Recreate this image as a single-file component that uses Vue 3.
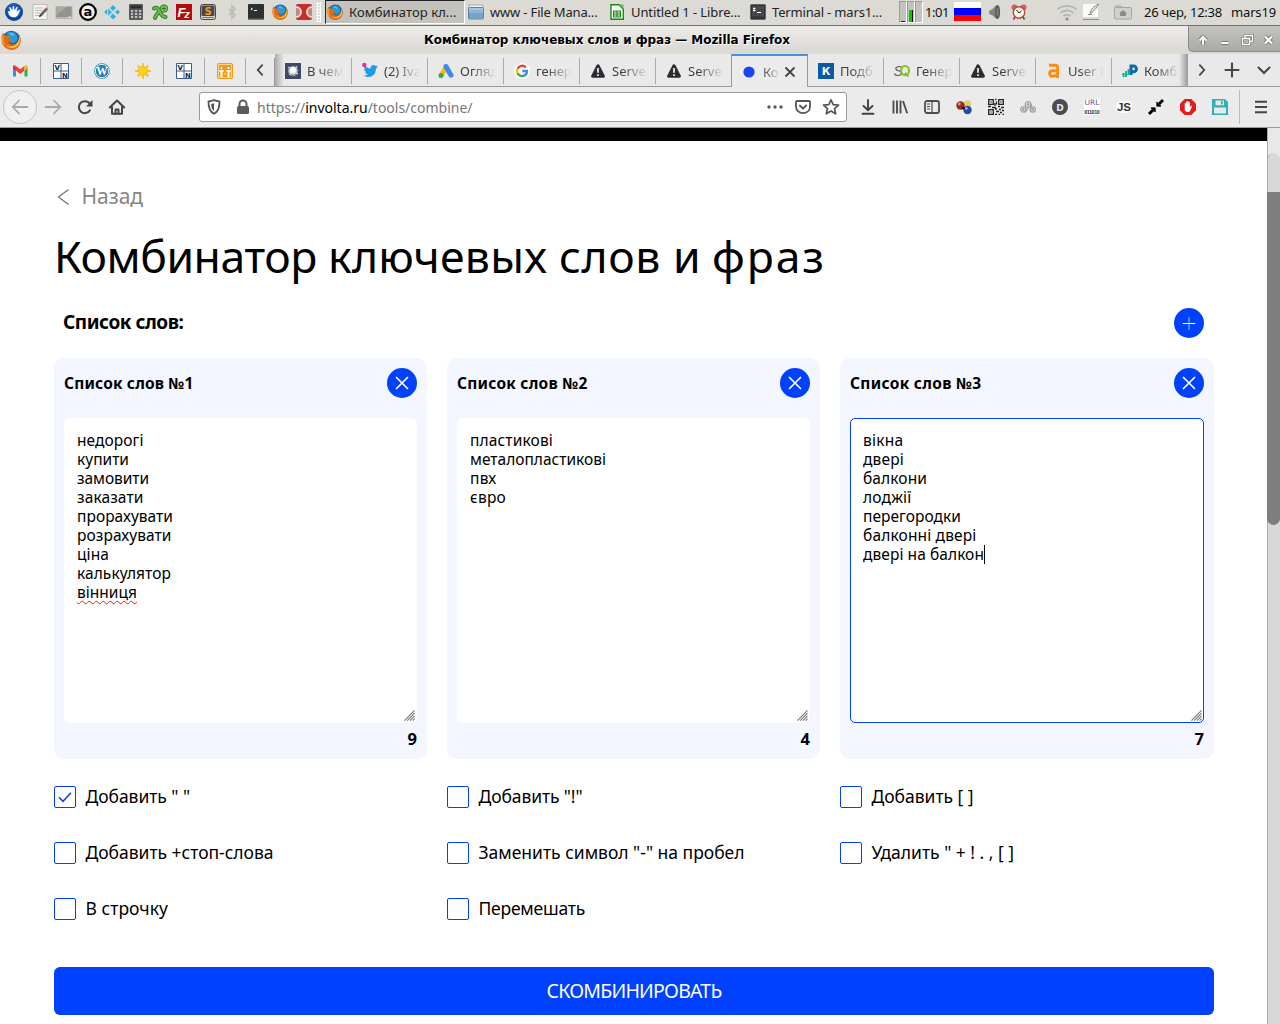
<script setup>
const vFit = {
  mounted(el, { value }) {
    if (!value) return
    const natural = el.getBoundingClientRect().width
    el.style.letterSpacing = (value - natural) / el.textContent.length + 'px'
  },
}

const firefox = `
<circle cx="8.2" cy="8" r="7.4" fill="#1b5fa8"/><path d="M5 2.2C8 .6 12 1.6 13 5c.8 3-1 5-3 5.500C7 11 6 8 4 7z" fill="#2a9ad6"/>
<path d="M7 3.200c1.500-.5 2.500.3 3 1.300" stroke="#8fd3f0" fill="none"/>
<path d="M1.600 2.200C.2 4.700-.2 9 1.500 12c2.600 4.600 9.300 5.200 12.500 1.300C16.300 10.700 16.300 6 14.300 3.200c.3 2 .3 3-.2 4.300-.8 3-3.200 4.500-5.600 4C6.800 11 6 10 6.200 8.800c1 .3 2-.1 2.600-.9-.9-.3-2-.2-2.700-1 .1-.9.8-1.400 1.200-1.800-.8-.1-1.700-.3-2.300.1C3.900 4.700 2.500 3.700 1.600 2.200z" fill="#e66a10"/>
<path d="M14.800 4.600c1 3 .3 6.800-2.600 8.700-3 2-7 1-8.700-1.800 3 2.500 7 2 9-.5 1.500-1.800 2.300-4 2.300-6.400z" fill="#ffc52e"/>
<path d="M2 4.600C1 7.500 1 10 2.600 12" stroke="#f8a02c" stroke-width="1.200" fill="none"/>`
const warn = `<path d="M8 1.200c.7 0 1.100.3 1.400.9l5.300 10.400c.6 1.300 0 2.200-1.300 2.200H2.600c-1.300 0-1.900-.9-1.300-2.200L6.600 2.100c.3-.6.7-.9 1.400-.9z" fill="#2a2e32"/><path d="M8 5v4.800M8 11.200v1.800" stroke="#e9e9e9" stroke-width="1.800"/>`
const vn = `<path d="M.5.5h15v15H.5z" fill="#fff" stroke="#365a96"/><path d="M8 0v16M0 8h16" stroke="#365a96"/><text x="1.500" y="7" font-size="7" font-weight="700" font-family="DejaVu Sans" fill="#222">V</text><text x="9" y="14.700" font-size="7" font-weight="700" font-family="DejaVu Sans" fill="#222">N</text>`
const term = `<rect x=".5" y=".5" width="15" height="15" rx="1" fill="#2f3335" stroke="#63676a"/><rect x="2" y="2" width="12" height="10.500" fill="#45494c"/><path d="M3 4.500h2.500M3 6.500h2.500M4.200 3.500v4M7 8.500h4" stroke="#fff" stroke-width="1"/>`

const icons = {
  firefox, warn, vn, term,
  mouse: `<circle cx="8" cy="8" r="8" fill="#0a45a5"/><circle cx="8" cy="7" r="6.500" fill="#1b5abb"/><path d="M2.800 8.500C2.600 7 4 6.800 5 7.700L3.800 4.500c-.2-.9.800-1.200 1.200-.4l1.700 2.600.1-3.300c.1-.9 1.200-.9 1.300 0l.5 3.300 1.300-2.800c.4-.8 1.400-.4 1.200.4l-.8 3.400 1.900-1.500c.7-.5 1.300.2.900.8-.9 1.500-1.300 5.500-5.300 5.700-2.700 0-4.600-1.400-5-4.200z" fill="#fff"/>`,
  edit: `<path d="M1 .5h14v15H1z" fill="#f3f3f0" stroke="#bbb"/><path d="M3 4h8M3 6.500h7M3 9h5M3 11.500h4" stroke="#bbb"/><path d="M7 13l1-3 5.500-6 2 1.800L10 12z" fill="#6a6864"/><path d="M13 4.500l1.200-1.300 2 1.800L15 6.300z" fill="#cb5d86"/><path d="M7 13l.8-2.300L9.500 12z" fill="#222"/>`,
  drive: `<rect x="-.5" y="2" width="17" height="13" rx="1" fill="#b5b4af"/><rect x=".5" y="3" width="15" height="10" fill="#92938e"/><path d="M1 10L11 3H1z" fill="#a9aaa5"/><path d="M10 14l5-2v2z" fill="#e1e1d9"/>`,
  at: `<circle cx="8" cy="8" r="7.800" fill="#f1f1ee" stroke="#000" stroke-width="2.200"/><text x="8" y="12.200" text-anchor="middle" font-family="DejaVu Sans" font-weight="700" font-size="13">a</text>`,
  kodi: `<g fill="#30b0e5"><path d="M9 1l3 3-3 3-3-3zM13.500 5.500L16 8l-2.500 2.500L11 8zM9 9.500l3 3-3 3-3-3zM3.200 5v6L.5 8.500v-1z"/><path d="M4.200 4.500l1 1L8 8l-3.800 4z"/></g>`,
  calc: `<rect x="1" width="14" height="16" rx="1" fill="#575b5c"/><rect x="2.500" y="1.500" width="11" height="3" fill="#2c2f30"/><path d="M3 7h2.200M7 7h2.200M11 7h2.200M3 10h2.200M7 10h2.200M11 10h2.200M3 13h2.200M7 13h2.200M11 13h2.200" stroke="#e4e4e0" stroke-width="1.700"/>`,
  gx: `<path d="M2 4.500c3-2 5 1 6 3.500s3 5 5.500 5M3 14c1-3 4-7 7-8" stroke="#2b7b1d" stroke-width="4" stroke-linecap="round" fill="none"/><path d="M2 4.500c3-2 5 1 6 3.500s3 5 5.500 5M3 14c1-3 4-7 7-8" stroke="#66bd4b" stroke-width="2.200" stroke-linecap="round" fill="none"/><circle cx="12" cy="4.500" r="3.700" fill="#80cb63" stroke="#2b7b1d"/><path d="M10 4.500h4M12 2.500v4" stroke="#2b7b1d"/>`,
  fz: `<path d="M0 0h16v16H0z" fill="#b60b0b"/><text x="1.500" y="13" font-family="Liberation Sans" font-weight="700" font-style="italic" font-size="13" fill="#fff">F</text><text x="8.200" y="14" font-family="Liberation Sans" font-weight="700" font-style="italic" font-size="11" fill="#fff">z</text>`,
  sublime: `<rect x=".5" y=".5" width="15" height="15" rx="2" fill="#d6d3ca" stroke="#4a4744"/><rect x="1.500" y="1.500" width="13" height="10.500" rx="1" fill="#4b4844"/><text x="8" y="10.500" text-anchor="middle" font-family="DejaVu Sans" font-weight="700" font-size="10" fill="#f09a2a">S</text><path d="M2 13.500h12" stroke="#777"/>`,
  bt: `<path d="M5 5l6 6-3 3V2l3 3-6 6" fill="none" stroke="#bcbcb8" stroke-width="1.600"/>`,
  terminal2: `<rect y="0" width="16" height="15.500" rx="1" fill="#2d3132"/><path d="M3 4l1.500 1L3 6M6 6.500h3" stroke="#fff" fill="none"/><path d="M0 15h16" stroke="#666"/>`,
  dc: `<rect width="16" height="16" rx="2" fill="#c92b26"/><path d="M0 3a5 5 0 010 10M16 3a5 5 0 000 10" stroke="#ecd8d4" stroke-width="2" fill="#bd8883"/>`,
  folder: `<path d="M1 1h14v4H1z" fill="#f2f2ef" stroke="#aaa"/><rect x=".5" y="3.500" width="15" height="11.500" rx="1" fill="#8bb4d5" stroke="#5c87a8"/><path d="M1 5h14" stroke="#bed6e8"/><path d="M1 9h14v5H1z" fill="#76a3c8"/>`,
  sheet: `<path d="M2 .7h8l4.300 4.300v10.300H2z" fill="#fff" stroke="#168a13" stroke-width="1.400"/><path d="M10 .5h4.500V5z" fill="#62b954"/><path d="M4.500 7h7v6h-7zM4.500 9h7M4.500 11h7M8 7v6" stroke="#168a13" stroke-width="1.100" fill="none"/>`,
  speaker: `<path d="M2.500 6.500c1-1 2-.8 3-1.500l4-4v14l-4-3.500c-1-.7-2-.5-3-1.500-.6-1-.6-2.500 0-3.500z" fill="#83847f"/><ellipse cx="10.500" cy="8" rx="2.600" ry="7" fill="#55595a"/><ellipse cx="10.500" cy="8" rx="1.200" ry="4" fill="#7b7e7d"/>`,
  alarm: `<path d="M4 13l-1.500 2.500M12 13l1.500 2.500" stroke="#8c302b" stroke-width="1.500"/><circle cx="3.500" cy="3.500" r="3" fill="#d85f51"/><circle cx="12.500" cy="3.500" r="3" fill="#d85f51"/><circle cx="8" cy="8.500" r="5.700" fill="#fff4e6" stroke="#a94e40" stroke-width="1.400"/><path d="M5.500 6l2.500 3 2.500-2" stroke="#222" fill="none"/>`,
  wifi: `<g fill="none" stroke="#b1b1ad" stroke-width="1.600"><path d="M-1.500 5.500c5-4.600 14-4.600 19 0M1.500 9c4-3.300 9-3.300 13 0M4.500 12c2.500-1.800 4.500-1.800 7 0"/></g><circle cx="8" cy="15" r="1.600" fill="#8f8f8b"/>`,
  note: `<path d="M0 0h15v13H0z" fill="#f9f9f8"/><path d="M0 15.500h16" stroke="#888"/><path d="M7 9.500c.5-4 4-7.500 8.500-9.500-1 3-4 7-8.500 9.500zM5 10.500h4" stroke="#8c8c88" stroke-width="1" fill="#ddd"/>`,
  home2: `<path d="M0 3.500V2h6l1 1.500" fill="#c6c6c3" stroke="#aaa"/><rect x="-.5" y="3.500" width="17" height="11.500" rx="1" fill="#cfcfcc" stroke="#a5a5a2"/><path d="M8 6l4 3.500h-1V12H5V9.500H4z" fill="#8b8b88"/>`,
  gmail: `<path d="M1 3.500v10h3V8z" fill="#4285f4"/><path d="M15.500 3.500v10h-3V8z" fill="#34a853"/><path d="M1 3.500C1 2 3 1.800 4 3l4.200 3.300L12.500 3v4.600L8.200 11 4 7.600 1 5.500z" fill="#ea4335"/><path d="M12.500 3c1.500-1.300 3-.5 3 1v1.500l-3 2.200z" fill="#fbbc04"/><path d="M1 3.500L4 6v1.800L1 5.500z" fill="#b9352c"/>`,
  wp: `<circle cx="8" cy="8" r="7.800" fill="#2080b0"/><circle cx="8" cy="8" r="6.700" fill="none" stroke="#e9f3f8"/><text x="8" y="12" text-anchor="middle" font-family="Liberation Serif" font-weight="700" font-size="11.500" fill="#fff">W</text>`,
  sun: `<path d="M8 0v16M0 8h16M2.500 2.500l11 11M13.500 2.500l-11 11" stroke="#f6c32c" stroke-width="1.800"/><circle cx="8" cy="8" r="4.500" fill="#fdd21c" stroke="#edb519"/>`,
  joinn: `<rect width="16" height="16" rx="2" fill="#f39a17"/><path d="M1.500 1.500h13v13h-13z" stroke="#ffd493" fill="none"/><path d="M2.500 7h4v2h-1v5h-2V9h-1zM9.500 7h4v2h-1v5h-2V9h-1z" fill="#fff"/><path d="M4.500 4v2M3.500 5h2M11.500 4v2M10.500 5h2M7.200 11h1.600" stroke="#fff"/>`,
  star: `<path d="M0 0h16v16H0z" fill="#414863"/><circle cx="8" cy="8" r="5.200" fill="#8d95aa"/><circle cx="8" cy="7.500" r="3.800" fill="#e4e8ef"/><circle cx="8" cy="7" r="2.500" fill="#fff"/><path d="M3 4l2 1M12 3l-1 2M4 12l2-2M13 11l-2-1" stroke="#e4e8ef"/>`,
  twitter: `<path d="M15.500 4.500l-1.600 1.300C14 11 10.500 14 6.500 14c-2 0-3.800-.6-5-1.500 1.800.1 3.300-.3 4.500-1.200-1.500-.1-2.500-1-2.800-2.200h1.300C3 8.500 2 7.200 2 5.800l1.400.4C2 5 1.800 3.500 2.500 2.300c1.700 2 3.800 3 6 3.200C8.400 3.300 9.800 2 11.500 2c1 0 1.700.4 2.300 1l1.800-.6-1 1.500z" fill="#1d9bf0"/><circle cx="2.300" cy="2" r="2.200" fill="#f0308a"/>`,
  ads: `<path d="M8.500 3.500L3.500 12" stroke="#fbbc04" stroke-width="5"/><path d="M8 3.500l5 8.700" stroke="#4285f4" stroke-width="5" stroke-linecap="round"/><circle cx="3" cy="12.500" r="2.500" fill="#34a853"/>`,
  google: `<circle cx="8" cy="8" r="8" fill="#fff"/><g fill="none" stroke-width="2.400"><path d="M11.800 4.300A5 5 0 003.600 5.800" stroke="#ea4335"/><path d="M3.600 5.800a5 5 0 000 4.400" stroke="#fbbc05"/><path d="M3.600 10.200a5 5 0 008 1.500" stroke="#34a853"/><path d="M11.300 12A5 5 0 0013 8H8.300" stroke="#4285f4"/></g>`,
  dot: `<circle cx="8" cy="8" r="5.600" fill="#1a43f5"/>`,
  kk: `<path d="M0 0h16v16H0z" fill="#0a5aa4"/><text x="8" y="12" text-anchor="middle" font-family="DejaVu Sans" font-weight="700" font-size="10.500" fill="#fff">К</text>`,
  sq: `<text x="-.5" y="13" font-family="Liberation Sans" font-style="italic" font-size="14" fill="#666">S</text><ellipse cx="11" cy="7.500" rx="4" ry="4.600" fill="none" stroke="#86bf20" stroke-width="2"/><path d="M11 10l3.500 3.500" stroke="#86bf20" stroke-width="2"/>`,
  ahrefs: `<path d="M3 2.200h6c1.600 0 2.600.8 2.600 2.300V15M12 7.800H6.500C4.500 7.800 3.700 9 3.700 10.500s.8 2.700 2.500 2.700c2.600 0 4.300-.7 5.800-2" fill="none" stroke="#ff8b0e" stroke-width="2.900"/>`,
  pp: `<path d="M1.500 10v4M4 8v6M6.500 6v6" stroke="#16a394" stroke-width="1.800"/><path d="M9 12V3h2.500a2.900 2.900 0 010 5.800H9" fill="none" stroke="#0b69a5" stroke-width="3"/><path d="M0 11.500h7" stroke="#2ab5a0"/>`,
}

const launchers = ['mouse', 'edit', 'drive', 'at', 'kodi', 'calc', 'gx', 'fz', 'sublime', 'bt', 'terminal2', 'firefox', 'dc']
const tasks = [
  { icon: 'firefox', text: 'Комбинатор кл...', w: 107.5, on: true },
  { icon: 'folder', text: 'www - File Mana...', w: 107.5 },
  { icon: 'sheet', text: 'Untitled 1 - Libre...', w: 109.5 },
  { icon: 'term', text: 'Terminal - mars1...', w: 110 },
]
const pinned = ['gmail', 'vn', 'wp', 'sun', 'vn', 'joinn']
const tabs = [
  ['star', 'В чем'], ['twitter', '(2) Iva'], ['ads', 'Огляд'], ['google', 'генер'], ['warn', 'Serve'], ['warn', 'Serve'],
  ['dot', 'Ко', true], ['kk', 'Подб'], ['sq', 'Генер'], ['warn', 'Serve'], ['ahrefs', 'User I'], ['pp', 'Комб'],
]
const urlActions = [
  `<g fill="#5a5a5a"><circle cx="2" cy="8" r="1.700"/><circle cx="8" cy="8" r="1.700"/><circle cx="14" cy="8" r="1.700"/></g>`,
  `<path d="M1.900 2h12.200c.5 0 .9.400.9.900v4.600c0 8.700-14 8.700-14 0V2.900c0-.5.400-.9.900-.9z" fill="none" stroke="#555" stroke-width="1.800"/><path d="M4.800 6.500L8 9.500l3.200-3" fill="none" stroke="#555" stroke-width="1.800" stroke-linecap="round"/>`,
  `<path d="M8 .8l2.200 4.800 5.300.5-4 3.500 1.200 5.200L8 12.100l-4.700 2.700 1.200-5.200-4-3.500 5.300-.5z" fill="none" stroke="#555" stroke-width="1.700" stroke-linejoin="round"/>`,
]
const extensions = [
  `<path d="M8 1v10M3.500 7L8 11.300 12.500 7M2.500 14.700h11" fill="none" stroke="#3f4346" stroke-width="1.900" stroke-linecap="round"/>`,
  `<path d="M1.500 1.500v13M5 1.500v13M8.500 1.500v13M11 2L15.200 14.300" stroke="#4a4e51" stroke-width="1.900"/>`,
  `<rect x="1" y="2" width="14" height="12" rx="2" fill="none" stroke="#4a4e51" stroke-width="1.800"/><path d="M8 2v12M3 5h3M3 7.500h3M3 10h3" stroke="#4a4e51" stroke-width="1.200"/>`,
  `<circle cx="11.500" cy="5" r="3.700" fill="#e5cf62"/><circle cx="4.500" cy="6.500" r="4.200" fill="#99291d"/><circle cx="11.500" cy="11" r="4.200" fill="#2547a0"/><circle cx="3.300" cy="5" r="1.400" fill="#e0978d"/><circle cx="10.300" cy="9.500" r="1.400" fill="#9ab2e5"/><circle cx="7.500" cy="9" r="1.500" fill="#111"/>`,
  `<path d="M.7.700h4.600v4.600H.7zM10.700.700h4.600v4.600h-4.600zM.7 10.700h4.600v4.600H.7z" fill="none" stroke="#222" stroke-width="1.300"/><path d="M2.500 3h1M12.500 3h1M2.500 13h1M7 .5h1.500M8.500 2.500v3M7 4v3M0 7.500h3M4 8.500h4M10 7.500h2M13 8.500h3M7 10h2M11 10.500h2M14 11.500h2M8 12.500h3M12 13.500h2M7 15.300h2M10.500 15.300h1.500M14.500 15.300H16" stroke="#222" stroke-width="1.300"/>`,
  `<g fill="none" stroke="#a0a0a0" stroke-width="1.200"><circle cx="3.300" cy="10.500" r="2.600"/><circle cx="8" cy="5.500" r="2.800"/><circle cx="12.800" cy="10.500" r="2.600"/><circle cx="3.300" cy="10.500" r=".8"/><circle cx="8" cy="5.500" r=".8"/><circle cx="12.800" cy="10.500" r=".8"/><path d="M4 13c3 0 3-3 4-4.500M11 5c1.500 2-1 5-.5 7"/></g>`,
  `<circle cx="8" cy="8" r="8" fill="#474d50"/><text x="8" y="11.500" text-anchor="middle" font-family="DejaVu Sans" font-weight="700" font-size="9" fill="#e9e9e9">D</text>`,
  `<path d="M0 0h16v16H0z" fill="#fff"/><text x="8" y="6.200" text-anchor="middle" font-family="DejaVu Sans" font-size="7.500" fill="#5b5797">URL</text><text x="8" y="15" text-anchor="middle" font-family="Liberation Sans" font-weight="700" font-size="4.600" fill="#111">011010</text>`,
  `<rect x="0" y="2" width="16" height="12" rx="5" fill="#fafafa"/><text x="8" y="12" text-anchor="middle" font-family="Liberation Sans" font-weight="700" font-size="11.500" fill="#333">JS</text>`,
  `<path d="M15 1l-4 4M1 15l4-4" stroke="#000" stroke-width="3"/><path d="M8.800 3v4.200H13zM7.200 13V8.800H3z" fill="#000" stroke="#000" stroke-width=".8"/>`,
  `<path d="M4.700 0h6.600L16 4.700v6.600L11.300 16H4.700L0 11.300V4.700z" fill="#e21b1b"/><path d="M4.700 4.500c0-.8 1.200-.8 1.200 0V3c0-.8 1.300-.8 1.300 0v-.5c0-.8 1.400-.8 1.400 0V3.500c0-.8 1.300-.8 1.300 0v4.500l1-1.100c.7-.5 1.300.1 1 .7L10 12c-.4.800-1 1-2 1-2.300 0-3.300-1-3.300-3z" fill="#fff"/>`,
  `<path d="M0 0h13l3 3v13H0z" fill="#2fb1b3"/><path d="M3.500 1.500h8.500v4.800H3.500z" fill="#e9e9e9"/><path d="M9.800 2v3.500" stroke="#2fb1b3" stroke-width="1.700"/><path d="M2 8.500h12V14.500H2z" fill="#e9e9e9"/>`,
]

const heading = [['Комбинатор ', 274], ['ключевых ', 231], ['слов ', 114], ['и ', 39], ['фраз', 114]]
const lists = [
  { title: 'Список слов №1', w: 129.5, words: [['недорогі', 66.5], ['купити', 52], ['замовити', 72], ['заказати', 66.5], ['прорахувати', 96], ['розрахувати', 94.5], ['ціна', 32], ['калькулятор', 94], ['вінниця', 60, 'misspelt']] },
  { title: 'Список слов №2', w: 130.5, words: [['пластикові', 83], ['металопластикові', 136], ['пвх', 26.5], ['євро', 36]] },
  { title: 'Список слов №3', w: 131.5, active: true, words: [['вікна', 40.5], ['двері', 41], ['балкони', 64], ['лоджії', 48.5], ['перегородки', 98], ['балконні двері', 113.5], ['двері на балкон', 122, 'caret']] },
]
const options = [
  ['Добавить " "', 104.5, true], ['Добавить "!"', 104], ['Добавить [ ]', 102],
  ['Добавить +стоп-слова', 188], ['Заменить символ "-" на пробел', 266], ['Удалить " + ! . , [ ]', 142.5],
  ['В строчку', 82.5], ['Перемешать', 106.5],
]
</script>

<template>
  <div class="screen">
    <div class="panel">
      <div class="launchers">
        <span v-for="(n, i) in launchers" :key="i" class="launch"><svg :class="{ large: i === 0 }" viewBox="0 0 16 16" v-html="icons[n]" /></span>
      </div>
      <i class="grip" />
      <div class="tasks">
        <div v-for="t in tasks" :key="t.text" class="task" :class="{ on: t.on }">
          <svg viewBox="0 0 16 16" v-html="icons[t.icon]" /><span v-fit="t.w">{{ t.text }}</span>
        </div>
      </div>
      <div class="meters"><i class="m blue" /><i class="m green" /><i class="m" /></div>
      <span v-fit="24" class="uptime">1:01</span>
      <i class="flag" />
      <svg class="t1" viewBox="0 0 16 16" v-html="icons.speaker" />
      <svg class="t2" viewBox="0 0 16 16" v-html="icons.alarm" />
      <svg class="t3" viewBox="0 0 16 16" v-html="icons.wifi" />
      <svg class="t4" viewBox="0 0 16 16" v-html="icons.note" />
      <svg class="t5" viewBox="0 0 16 16" v-html="icons.home2" />
      <span v-fit="78" class="date">26 чер, 12:38</span>
      <span v-fit="45" class="user">mars19</span>
    </div>

    <div class="titlebar">
      <svg class="app" viewBox="0 0 16 16" v-html="icons.firefox" />
      <div class="caption"><span v-fit="366">Комбинатор ключевых слов и фраз — Mozilla Firefox</span></div>
      <div class="winbtns">
        <svg viewBox="0 0 92 28">
          <g fill="none" stroke="#7d7d79" stroke-width="4" stroke-linejoin="round"><path d="M14 18.500v-6M10.500 14.500l3.500-3.500 3.500 3.500" /><path d="M32.500 17h7" /><path d="M53.500 12.500h7v6h-7zM56 12v-2.500h7.500v6h-3" stroke-width="3" /><path d="M76 10.500l7 7M83 10.500l-7 7" /></g>
          <g fill="none" stroke="#fff" stroke-width="2"><path d="M14 18.500v-6M10.500 14.500l3.500-3.500 3.500 3.500" /><path d="M32.500 17h7" /><path d="M53.500 12.500h7v6h-7zM56 12v-2.500h7.500v6h-3" stroke-width="1.300" /><path d="M76 10.500l7 7M83 10.500l-7 7" /></g>
        </svg>
      </div>
    </div>

    <div class="tabstrip">
      <div v-for="(n, i) in pinned" :key="i" class="pin"><svg viewBox="0 0 16 16" v-html="icons[n]" /></div>
      <div class="scroll left"><svg viewBox="0 0 16 16"><path d="M10.500 2.500L5.500 8l5 5.500" /></svg></div>
      <div class="tabs">
        <div v-for="(t, i) in tabs" :key="i" class="tab" :class="{ current: t[2], before: i === 5 }">
          <svg viewBox="0 0 16 16" v-html="icons[t[0]]" />
          <span class="label" :class="{ short: t[2] }">{{ t[1] }}</span>
          <svg v-if="t[2]" class="close" viewBox="0 0 16 16"><path d="M3.500 3.500l9 9M12.500 3.500l-9 9" /></svg>
        </div>
      </div>
      <div class="scroll right"><svg viewBox="0 0 16 16"><path d="M5.500 2.500l5 5.500-5 5.500" /></svg></div>
      <div class="ctl"><svg viewBox="0 0 16 16"><path d="M8 1.500v13M1.500 8h13" /></svg></div>
      <div class="ctl"><svg viewBox="0 0 16 16"><path d="M2.500 5.500L8 11l5.500-5.500" /></svg></div>
    </div>

    <div class="toolbar">
      <div class="back"><svg viewBox="0 0 16 16"><path d="M15.500 8h-15M7 1.500L.8 8 7 14.500" /></svg></div>
      <div class="nav dim"><svg viewBox="0 0 16 16"><path d="M.5 8h15M9 1.500L15.200 8 9 14.500" /></svg></div>
      <div class="nav"><svg viewBox="0 0 16 16"><path d="M13 11.300A6 6 0 1113 5" /><path d="M15.500 1v6.500H9z" class="solid" /></svg></div>
      <div class="nav"><svg viewBox="0 0 16 16"><path d="M.8 8.500L8 1.500l7.200 7M3 8v6.800h10V8" /><path d="M6.500 15v-4.500h3V15" /></svg></div>
      <div class="urlbar">
        <svg class="shield" viewBox="0 0 16 16"><path d="M8 1.200l5.500 1.300c.2 6-1.300 10-5.500 12.300C3.800 12.500 2.300 8.500 2.500 2.500z" fill="none" stroke="#555" stroke-width="1.800" /><path d="M8 4.200v7.700c-2-1.400-2.800-3.800-2.800-7z" fill="#555" /></svg>
        <i class="bar" />
        <svg class="lock" viewBox="0 0 16 16"><path d="M4.500 8V5a3.500 3.500 0 017 0v3" fill="none" stroke="#5c5c5c" stroke-width="2" /><rect x="2" y="7" width="12" height="8" rx="1.500" fill="#5c5c5c" /></svg>
        <span v-fit="215.500" class="url">https://<b>involta.ru</b>/tools/combine/</span>
        <svg v-for="(a, i) in urlActions" :key="i" class="action" viewBox="0 0 16 16" v-html="a" />
      </div>
      <div class="exts"><svg v-for="(e, i) in extensions" :key="i" viewBox="0 0 16 16" v-html="e" /></div>
      <div class="menu"><svg viewBox="0 0 16 16"><path d="M2 2.800h12M2 8h12M2 13.200h12" /></svg></div>
    </div>

    <div class="viewport">
      <div class="content">
        <div class="black" />
        <main>
          <a class="backlink"><svg viewBox="0 0 12 18"><path d="M11.500 1.500L1.500 9l10 7.500" /></svg><span v-fit="61.500">Назад</span></a>
          <h1><span v-for="h in heading" :key="h[0]" v-fit="h[1]">{{ h[0] }}</span></h1>
          <div class="listhead">
            <strong v-fit="120.500">Список слов:</strong>
            <span class="round"><svg viewBox="0 0 30 30"><path d="M9 15.500h12" /><path d="M15 9.500v12" opacity=".7" /></svg></span>
          </div>
          <div class="cards">
            <section v-for="l in lists" :key="l.title" class="card">
              <header>
                <strong v-fit="l.w">{{ l.title }}</strong>
                <span class="round"><svg viewBox="0 0 30 30"><path d="M9.500 9.500l11 11M20.500 9.500l-11 11" stroke-width="1.700" /></svg></span>
              </header>
              <div class="area" :class="{ active: l.active }">
                <div v-for="w in l.words" :key="w[0]" class="line"><span v-fit="w[1]" :class="w[2]">{{ w[0] }}</span></div>
                <svg class="resize" viewBox="0 0 12 12"><path d="M.5 11.500l11-11M3.500 11.500l8-8M6.500 11.500l5-5M9.500 11.500l2-2" /></svg>
              </div>
              <footer>{{ l.words.length }}</footer>
            </section>
          </div>
          <div class="options">
            <label v-for="o in options" :key="o[0]">
              <span class="box"><svg v-if="o[2]" viewBox="0 0 20 20"><path d="M4 10.300l4 4L16 5.700" /></svg></span>
              <span v-fit="o[1]" class="caption-text">{{ o[0] }}</span>
            </label>
          </div>
          <div class="submit"><span v-fit="175">СКОМБИНИРОВАТЬ</span></div>
        </main>
      </div>
      <div class="scrollbar"><div class="track"><div class="thumb" /></div></div>
    </div>
  </div>
</template>

<style>
body { background: #fff; overflow: hidden; }
</style>

<style scoped>
* { box-sizing: border-box; }
svg { display: block; flex: none; overflow: visible; width: 16px; height: 16px; }
span { white-space: nowrap; flex: none; }
.screen { width: 1280px; height: 1024px; display: flex; flex-direction: column; overflow: hidden; font-family: "Noto Sans", sans-serif; color: #000; }

.panel { height: 26px; flex: none; display: flex; align-items: center; background: #dcdad5; border-bottom: 1px solid #75756a; font-size: 13px; color: #111; padding-bottom: 1px; }
.launchers { display: flex; width: 316px; padding-left: 4px; }
.launch { width: 24px; display: flex; justify-content: center; align-items: center; }
.launch .large { width: 18px; height: 18px; margin-left: -4px; }
.grip { width: 9px; height: 20px; flex: none; background: radial-gradient(circle, #fff 1px, transparent 1.2px) 0 0 / 3px 3px; border-right: 4px solid #dcdad5; }
.tasks { display: flex; width: 574px; }
.task { width: 141px; height: 24px; display: flex; align-items: center; padding-left: 3px; gap: 6px; color: #222; }
.task.on { width: 140px; padding-left: 1px; background: #c4c2bd; border: 1px solid #222; border-right-color: #fff; border-bottom-color: #fff; }
.meters { display: flex; width: 24px; height: 22px; }
.m { flex: 1; border: 1px solid #999; border-right-color: #fff; border-bottom-color: #fff; background: #c4c2bd; display: flex; }
.m.blue { background: linear-gradient(#00f, #00f) 1px 19px / 4px 1px no-repeat #c4c2bd; }
.m.green { background: linear-gradient(90deg, #0c0 3px, #111 3px) 1px 8px / 4px 12px no-repeat #c4c2bd; }
.uptime { margin-left: 2px; }
.flag { width: 27px; height: 19px; flex: none; margin-left: 5px; margin-top: -1px; background: linear-gradient(#fff 33%, #00f 33%, #00f 66%, #f00 66%); }
.t1 { margin-left: 6px; } .t2 { margin-left: 8px; } .t3 { margin-left: 32px; } .t4 { margin-left: 8px; } .t5 { margin-left: 16px; }
.date { margin-left: 13px; } .user { margin-left: 9px; }

.titlebar { height: 28px; flex: none; display: flex; align-items: center; background: linear-gradient(#eeedea, #dcdad5 80%); }
.app { width: 20px; height: 20px; margin-left: 1px; }
.caption { width: 1167px; display: flex; justify-content: center; font: bold 12px "DejaVu Sans", sans-serif; text-shadow: 1px 1px 0 #fff; padding-left: 5px; }
.winbtns { width: 92px; height: 26px; align-self: flex-start; background: linear-gradient(#c5c4c0, #aaa9a5); border-left: 1px solid #888; border-bottom: 1px solid #888; border-bottom-left-radius: 5px; }
.winbtns svg { width: 92px; height: 28px; }

.tabstrip { height: 33px; flex: none; display: flex; background: #e9e9e9; border-bottom: 1px solid #999; }
.pin { width: 41px; flex: none; display: flex; align-items: center; justify-content: center; border-right: 1px solid transparent; border-image: linear-gradient(transparent 15%, #aaa 15%, #aaa 90%, transparent 90%) 1; padding-top: 2px; }
.scroll { display: flex; flex: none; align-items: center; justify-content: center; width: 28px; }
.scroll.left { width: 29px; padding-right: 2px; background: linear-gradient(#999, #999) 28px 100% / 1px 28px no-repeat; }
.scroll svg, .ctl svg { fill: none; stroke: #42474a; stroke-width: 2.100; stroke-linecap: round; }
.scroll svg { width: 14px; height: 14px; }
.tabs { display: flex; flex: none; width: 913px; background: linear-gradient(90deg, #aaa, transparent 9px, transparent 904px, #999 913px); }
.tab { width: 76px; flex: none; display: flex; align-items: center; gap: 6px; padding: 2px 0 0 10px; border-right: 1px solid transparent; border-image: linear-gradient(transparent 15%, #aaa 15%, #aaa 90%, transparent 90%) 1; }
.tab:first-child { width: 77px; padding-left: 10px; }
.tab.before { width: 75px; border-image: none; }
.tab:last-child { border-image: none; }
.tab.current { width: 77px; height: 33px; border: 1px solid #999; border-top: 2px solid #4a90d9; border-bottom: 0; border-image: none; background: #ebebeb; padding: 0 0 0 9px; }
.label { width: 36px; overflow: visible; font-size: 13px; line-height: 20px; color: #3c3f42; mask-image: linear-gradient(90deg, #000 30%, transparent 100%); }
.label.short { width: 17px; color: #666; }
.close { fill: none; stroke: #444; stroke-width: 1.800; margin-left: -4px; }
.ctl { width: 32px; flex: none; display: flex; align-items: center; justify-content: center; }

.toolbar { height: 41px; flex: none; display: flex; align-items: center; background: #ebebeb; border-bottom: 1px solid #999; }
.back { width: 34px; height: 34px; margin-left: 3px; border: 1px solid #c4c4c4; border-radius: 50%; background: #f0f0f0; display: flex; align-items: center; justify-content: center; }
.back svg, .nav svg { fill: none; stroke: #42474a; stroke-width: 2; stroke-linecap: round; stroke-linejoin: round; }
.back svg, .dim svg { stroke: #aaa; stroke-width: 1.800; }
.nav { width: 32px; display: flex; justify-content: center; }
.nav .solid { fill: #42474a; stroke: none; }
.urlbar { width: 648px; height: 30px; margin-left: 66px; border: 1px solid #999; border-radius: 3px; background: #fff; display: flex; align-items: center; padding-left: 6px; }
.bar { width: 1px; height: 22px; background: #aaa; margin: 0 6px; }
.lock { margin: 0 6px 0 1px; }
.url { font-size: 14px; color: #777; margin-right: 295px; }
.url b { font-weight: 400; color: #000; }
.action { margin-right: 12px; }
.exts { display: flex; gap: 16px; margin-left: 13px; }
.menu { height: 34px; border-left: 1px solid #bbb; margin-left: 11px; padding-left: 13px; display: flex; align-items: center; }
.menu svg { fill: none; stroke: #42474a; stroke-width: 1.900; }

.viewport { flex: 1; min-height: 0; display: flex; }
.content { width: 1267px; }
.black { height: 13px; background: #000; }
main { padding: 41px 53px 0 54px; }
.backlink { display: flex; align-items: center; gap: 12.500px; height: 30px; color: #858585; font-size: 21px; padding-left: 3px; line-height: 28px; }
.backlink span { padding-bottom: 2px; }
.backlink svg { width: 12px; height: 18px; fill: none; stroke: #777; stroke-width: 1.300; }
h1 { margin: 14px 0 0; height: 62px; line-height: 60px; font-size: 44.500px; font-weight: 400; display: flex; }
h1 span { white-space: pre; }
.listhead { margin-top: 20px; height: 30px; display: flex; align-items: center; justify-content: space-between; padding: 0 10px 0 9px; font-size: 19px; }
.listhead strong { padding-bottom: 1px; line-height: 25px; }
strong { white-space: nowrap; }
.round { width: 30px; height: 30px; border-radius: 50%; background: #0040ff; }
.round svg { width: 30px; height: 30px; stroke: #fff; stroke-width: 1; stroke-linecap: round; }
.cards { display: grid; grid-template-columns: 373px 373px 374px; gap: 20px; margin-top: 20px; }
.card { height: 401px; background: #f3f6ff; border-radius: 10px; padding: 10px; }
.card header { display: flex; justify-content: space-between; align-items: center; font-size: 15.500px; height: 30px; }
.area { margin-top: 20px; height: 305px; background: #fff; border: 1px solid #fff; border-radius: 5px; padding: 12px; position: relative; font-size: 15.500px; }
.area.active { border-color: #0040ff; }
.line { height: 19px; line-height: 18px; display: flex; }
.misspelt { text-decoration: underline wavy #e02020 1px; text-underline-offset: 2px; text-decoration-skip-ink: none; }
.caret { border-right: 1px solid #000; }
.resize { position: absolute; right: 1px; bottom: 1px; width: 11px; height: 11px; fill: none; stroke: #777; stroke-width: 1.200; }
.card footer { text-align: right; font-weight: 700; font-size: 16.500px; line-height: 20px; margin-top: 6px; }
.options { display: grid; grid-template-columns: 373px 373px 374px; column-gap: 20px; row-gap: 34px; margin-top: 27px; }
.options label { display: flex; align-items: center; gap: 9.500px; height: 22px; font-size: 17.500px; line-height: 22px; }
.caption-text { padding-bottom: 2px; }
.box { width: 22px; height: 22px; border: 1px solid #0040ff; border-radius: 2px; }
.box svg { width: 20px; height: 20px; fill: none; stroke: #0040ff; stroke-width: 1.500; }
.submit { margin-top: 47px; height: 48px; padding-bottom: 2px; border-radius: 6px; background: #0040ff; color: #fff; font-size: 19.500px; display: flex; align-items: center; justify-content: center; }
.scrollbar { width: 13px; background: #e8e8e8; border-left: 1px solid #aaa; padding-top: 25px; }
.track { height: 880px; border-radius: 7px 7px 0 0; background: #d8d8d8; padding-top: 39px; margin-left: -1px; border-left: 1px solid #aaa; }
.thumb { height: 333px; background: #7c7f7e; border-radius: 0 0 7px 7px; margin-left: -1px; }
</style>
